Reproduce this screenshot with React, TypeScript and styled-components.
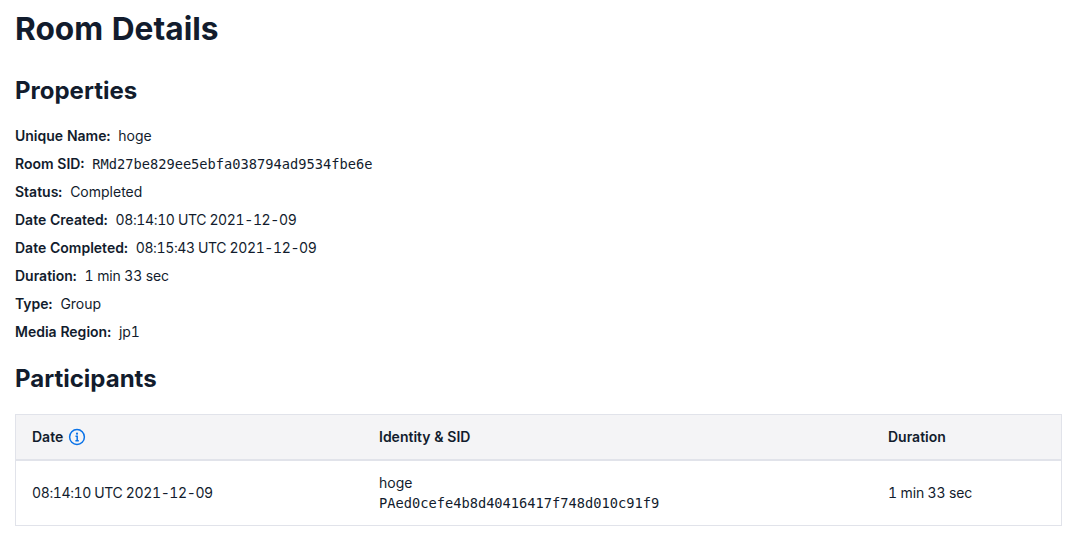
import React from 'react';
import styled, { createGlobalStyle } from 'styled-components';

const GlobalStyle = createGlobalStyle`
  html, body {
    margin: 0;
    padding: 0;
    background: #fff;
  }
  body {
    font-family: Inter, "Noto Sans", sans-serif;
    font-variant-numeric: tabular-nums;
    color: #121c2d;
  }
`;

const Page = styled.main`
  padding: 9px 8px 16px 15px;
  box-sizing: border-box;
  width: 1070px;
`;

const Title = styled.h1`
  margin: 0 0 26px;
  font-size: 31.7px;
  line-height: 40px;
  font-weight: 700;
  color: #121c2d;
`;

const SectionTitle = styled.h2`
  margin: 0 0 19px;
  font-size: 24px;
  line-height: 32px;
  font-weight: 700;
  color: #121c2d;
`;

const PropertyList = styled.div`
  display: flex;
  flex-direction: column;
  gap: 8px;
  margin-bottom: 21px;
`;

const Property = styled.div`
  display: flex;
  gap: 8px;
  font-size: 14px;
  line-height: 20px;
`;

const Label = styled.span`
  font-weight: 600;
`;

const Value = styled.span<{ $kind?: 'date' | 'duration' }>`
  letter-spacing: ${(p) =>
    p.$kind === 'date' ? '-0.38px' : p.$kind === 'duration' ? '-0.15px' : 'normal'};
`;

const Mono = styled.span`
  font-family: "DejaVu Sans Mono", "Liberation Mono", monospace;
  font-size: 13.7px;
`;

const Table = styled.div`
  border: 1px solid #e1e3ea;
  width: 1047px;
  box-sizing: border-box;
`;

const Row = styled.div<{ $head?: boolean }>`
  display: grid;
  grid-template-columns: 347px 509px 1fr;
  align-items: center;
  padding: 0 16px;
  font-size: 14px;
  line-height: 20px;
  height: ${(p) => (p.$head ? '46px' : '64px')};
  background: ${(p) => (p.$head ? '#f4f4f6' : '#fff')};
  border-bottom: ${(p) => (p.$head ? '2px solid #e1e3ea' : 'none')};
  box-sizing: border-box;
  font-weight: ${(p) => (p.$head ? 600 : 400)};
`;

const HeadCell = styled.div`
  display: flex;
  align-items: center;
  gap: 4px;
`;

const InfoIcon = () => (
  <svg width="20" height="20" viewBox="0 0 20 20" fill="none" aria-hidden="true">
    <circle cx="10" cy="10" r="7.4" stroke="#0972e8" strokeWidth="1.5" />
    <circle cx="10" cy="6.7" r="1.1" fill="#0972e8" />
    <path d="M8.5 9.3H10.2V13.5M8.4 13.7H11.8" stroke="#0972e8" strokeWidth="1.5" />
  </svg>
);

const properties: { label: string; value: string; mono?: boolean; kind?: 'date' | 'duration' }[] = [
  { label: 'Unique Name:', value: 'hoge' },
  { label: 'Room SID:', value: 'RMd27be829ee5ebfa038794ad9534fbe6e', mono: true },
  { label: 'Status:', value: 'Completed' },
  { label: 'Date Created:', value: '08:14:10 UTC 2021-12-09', kind: 'date' },
  { label: 'Date Completed:', value: '08:15:43 UTC 2021-12-09', kind: 'date' },
  { label: 'Duration:', value: '1 min 33 sec', kind: 'duration' },
  { label: 'Type:', value: 'Group' },
  { label: 'Media Region:', value: 'jp1' },
];

export default function App() {
  return (
    <Page>
      <GlobalStyle />
      <Title>Room Details</Title>
      <SectionTitle>Properties</SectionTitle>
      <PropertyList>
        {properties.map((p) => (
          <Property key={p.label}>
            <Label>{p.label}</Label>
            {p.mono ? <Mono>{p.value}</Mono> : <Value $kind={p.kind}>{p.value}</Value>}
          </Property>
        ))}
      </PropertyList>
      <SectionTitle>Participants</SectionTitle>
      <Table>
        <Row $head>
          <HeadCell>
            Date <InfoIcon />
          </HeadCell>
          <HeadCell>Identity &amp; SID</HeadCell>
          <HeadCell>Duration</HeadCell>
        </Row>
        <Row>
          <Value $kind="date">08:14:10 UTC 2021-12-09</Value>
          <div>
            <div>hoge</div>
            <Mono>PAed0cefe4b8d40416417f748d010c91f9</Mono>
          </div>
          <Value $kind="duration">1 min 33 sec</Value>
        </Row>
      </Table>
    </Page>
  );
}
